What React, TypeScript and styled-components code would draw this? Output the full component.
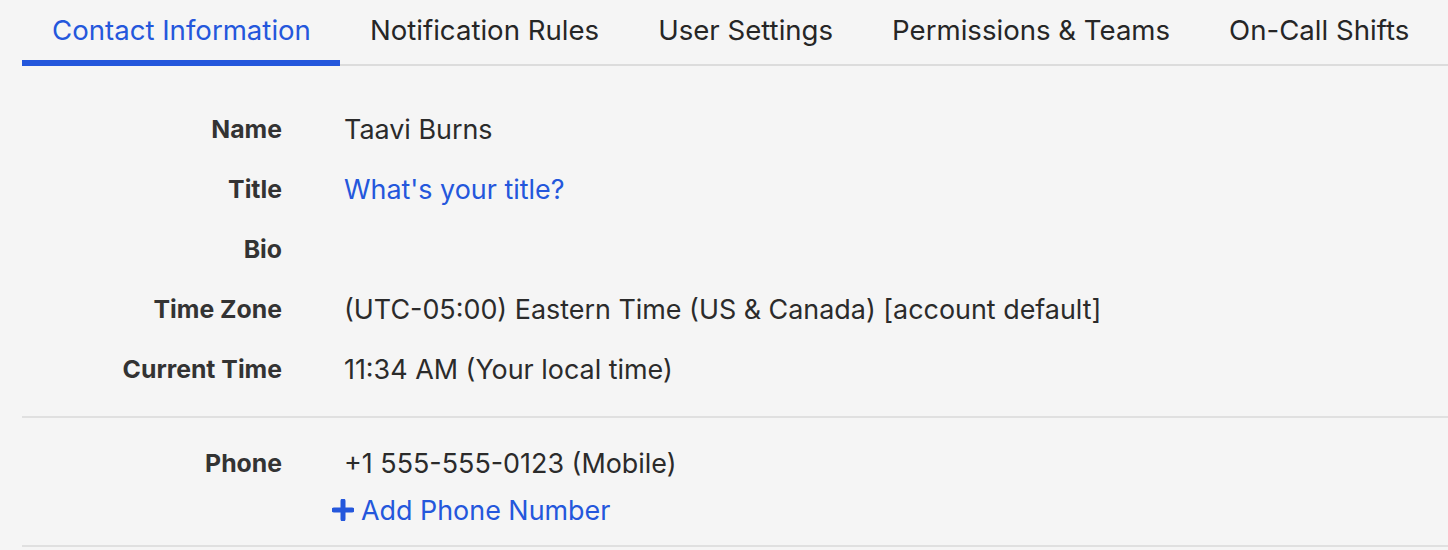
import styled, { createGlobalStyle } from "styled-components";

const GlobalStyle = createGlobalStyle`
  body {
    margin: 0;
    background: #f5f5f5;
    font-family: Inter, "Noto Sans", sans-serif;
    color: #2b2b2b;
  }
`;

const Page = styled.div`
  padding-left: 22px;
`;

const Tabs = styled.nav`
  display: flex;
  border-bottom: 2px solid #dcdcdc;
  height: 64px;
`;

const Tab = styled.div<{ $active?: boolean }>`
  padding: 0 29px 0 30px;
  font-size: 27.6px;
  line-height: 60px;
  height: 60px;
  color: ${(p) => (p.$active ? "#2457dc" : "#262626")};
  border-bottom: 6px solid ${(p) => (p.$active ? "#2457dc" : "transparent")};
  margin-bottom: -2px;
  white-space: nowrap;
`;

const Section = styled.section<{ $top: number; $bottom: number }>`
  padding: ${(p) => p.$top}px 0 ${(p) => p.$bottom}px;
  border-bottom: 2px solid #e0e0e0;
`;

const Row = styled.div<{ $h?: number }>`
  display: grid;
  grid-template-columns: 260px 1fr;
  column-gap: 62px;
  align-items: center;
  height: ${(p) => p.$h ?? 60}px;
  font-size: 26.9px;
`;

const Label = styled.div`
  text-align: right;
  font-weight: 700;
  font-size: 24.8px;
  color: #333;
`;

const Value = styled.div<{ $link?: boolean }>`
  color: ${(p) => (p.$link ? "#2457dc" : "#2b2b2b")};
  white-space: nowrap;
`;

const AddLink = styled.div`
  display: flex;
  align-items: center;
  gap: 7px;
  margin-left: -12px;
  color: #2457dc;
`;

const Plus = () => (
  <svg width="22" height="22" viewBox="0 0 22 22">
    <path d="M11 2v18M2 11h18" stroke="#2457dc" strokeWidth="5" strokeLinecap="round" />
  </svg>
);

const App = () => {
  const tabs = [
    "Contact Information",
    "Notification Rules",
    "User Settings",
    "Permissions & Teams",
    "On-Call Shifts",
  ];
  const rows: [string, string, boolean?][] = [
    ["Name", "Taavi Burns"],
    ["Title", "What's your title?", true],
    ["Bio", ""],
    ["Time Zone", "(UTC-05:00) Eastern Time (US & Canada) [account default]"],
    ["Current Time", "11:34 AM (Your local time)"],
  ];
  return (
    <>
      <GlobalStyle />
      <Page>
        <Tabs>
          {tabs.map((t, i) => (
            <Tab key={t} $active={i === 0}>
              {t}
            </Tab>
          ))}
        </Tabs>
        <Section $top={33} $bottom={17}>
          {rows.map(([l, v, link]) => (
            <Row key={l}>
              <Label>{l}</Label>
              <Value $link={link}>{v}</Value>
            </Row>
          ))}
        </Section>
        <Section $top={15} $bottom={18}>
          <Row>
            <Label>Phone</Label>
            <Value>+1 555-555-0123 (Mobile)</Value>
          </Row>
          <Row $h={34}>
            <div />
            <AddLink>
              <Plus />
              Add Phone Number
            </AddLink>
          </Row>
        </Section>
      </Page>
    </>
  );
};

export default App;
